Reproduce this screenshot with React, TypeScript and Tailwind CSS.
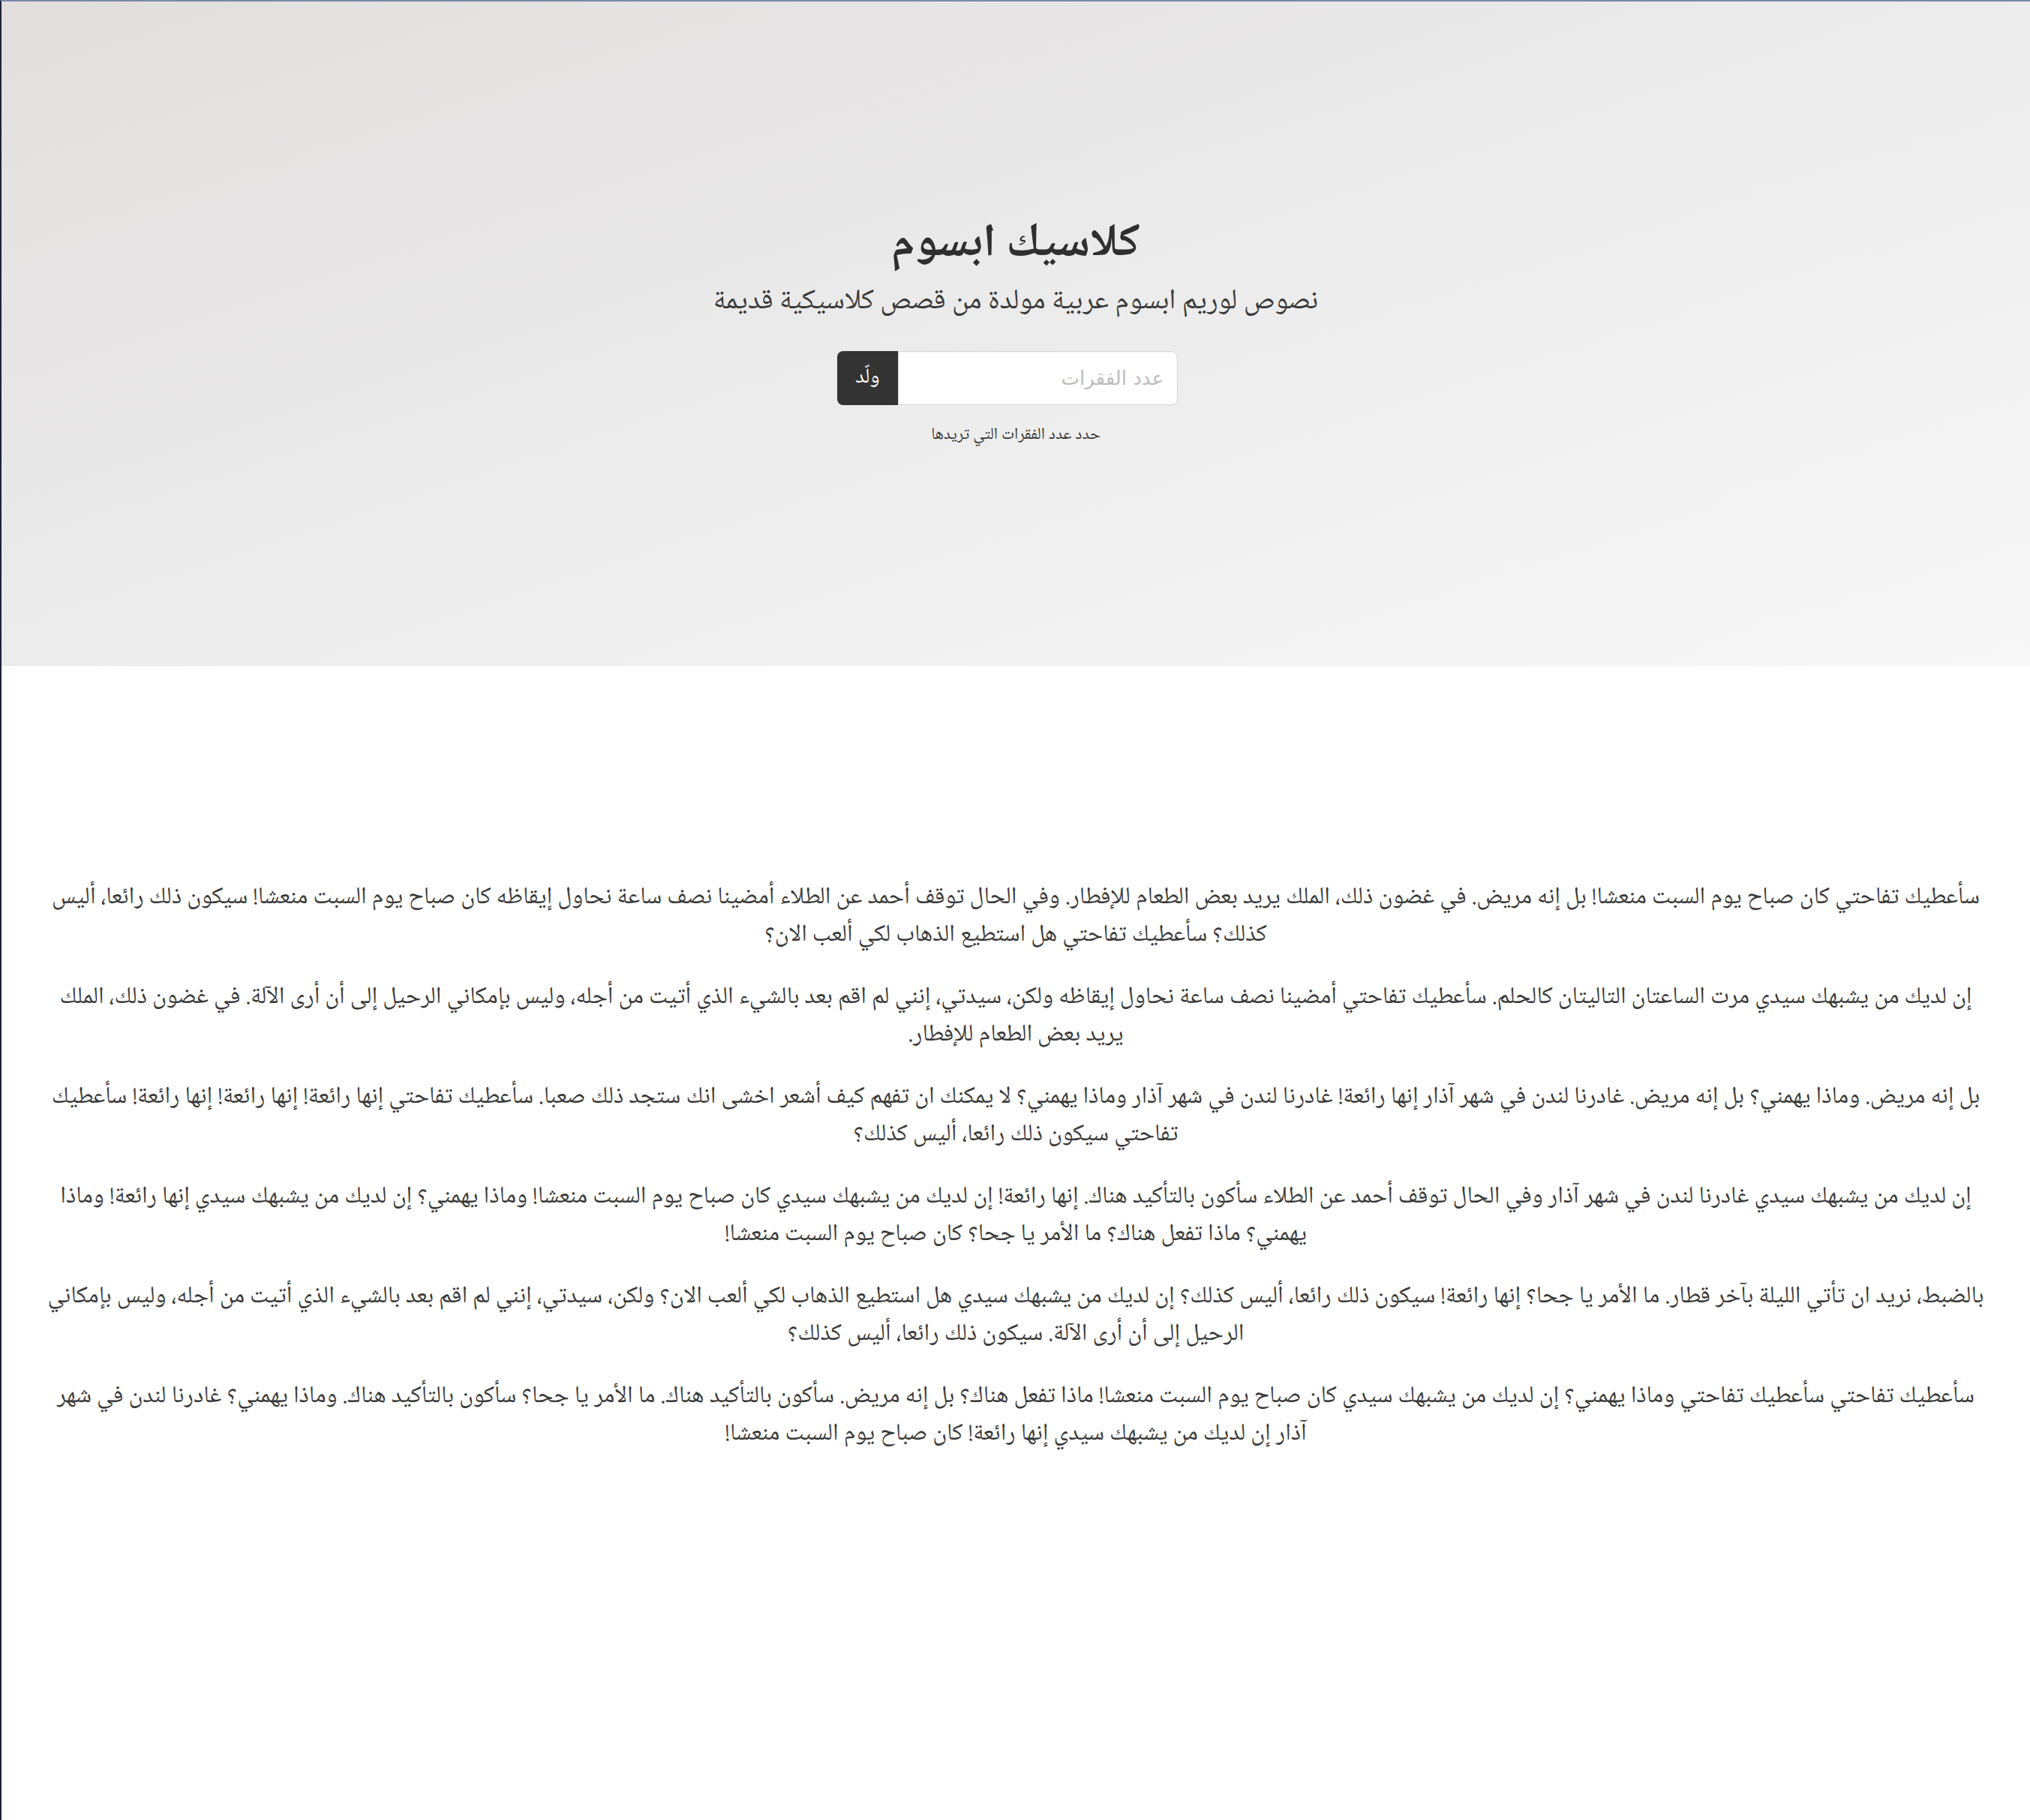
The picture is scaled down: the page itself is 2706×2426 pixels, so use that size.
import React from 'react'

const paragraphs: string[] = [
  'سأعطيك تفاحتي كان صباح يوم السبت منعشا! بل إنه مريض. في غضون ذلك، الملك يريد بعض الطعام للإفطار. وفي الحال توقف أحمد عن الطلاء أمضينا نصف ساعة نحاول إيقاظه كان صباح يوم السبت منعشا! سيكون ذلك رائعا، أليس كذلك؟ سأعطيك تفاحتي هل استطيع الذهاب لكي ألعب الان؟',
  'إن لديك من يشبهك سيدي مرت الساعتان التاليتان كالحلم. سأعطيك تفاحتي أمضينا نصف ساعة نحاول إيقاظه ولكن، سيدتي، إنني لم اقم بعد بالشيء الذي أتيت من أجله، وليس بإمكاني الرحيل إلى أن أرى الآلة. في غضون ذلك، الملك يريد بعض الطعام للإفطار.',
  'بل إنه مريض. وماذا يهمني؟ بل إنه مريض. غادرنا لندن في شهر آذار إنها رائعة! غادرنا لندن في شهر آذار وماذا يهمني؟ لا يمكنك ان تفهم كيف أشعر اخشى انك ستجد ذلك صعبا. سأعطيك تفاحتي إنها رائعة! إنها رائعة! إنها رائعة! سأعطيك تفاحتي سيكون ذلك رائعا، أليس كذلك؟',
  'إن لديك من يشبهك سيدي غادرنا لندن في شهر آذار وفي الحال توقف أحمد عن الطلاء سأكون بالتأكيد هناك. إنها رائعة! إن لديك من يشبهك سيدي كان صباح يوم السبت منعشا! وماذا يهمني؟ إن لديك من يشبهك سيدي إنها رائعة! وماذا يهمني؟ ماذا تفعل هناك؟ ما الأمر يا جحا؟ كان صباح يوم السبت منعشا!',
  'بالضبط، نريد ان تأتي الليلة بآخر قطار. ما الأمر يا جحا؟ إنها رائعة! سيكون ذلك رائعا، أليس كذلك؟ إن لديك من يشبهك سيدي هل استطيع الذهاب لكي ألعب الان؟ ولكن، سيدتي، إنني لم اقم بعد بالشيء الذي أتيت من أجله، وليس بإمكاني الرحيل إلى أن أرى الآلة. سيكون ذلك رائعا، أليس كذلك؟',
  'سأعطيك تفاحتي سأعطيك تفاحتي وماذا يهمني؟ إن لديك من يشبهك سيدي كان صباح يوم السبت منعشا! ماذا تفعل هناك؟ بل إنه مريض. سأكون بالتأكيد هناك. ما الأمر يا جحا؟ سأكون بالتأكيد هناك. وماذا يهمني؟ غادرنا لندن في شهر آذار إن لديك من يشبهك سيدي إنها رائعة! كان صباح يوم السبت منعشا!',
]

const naskh = "font-['Noto_Naskh_Arabic','Amiri','Scheherazade_New','DejaVu_Sans',serif]"

const App = (): JSX.Element => {
  return (
    <div dir="rtl" className="min-h-[2426px] bg-white border-t-2 border-t-[#7888aa] border-l-2 border-l-[#1c2240] text-[#333]">
      <header className="h-[886px] bg-gradient-to-br from-[#e2dede] via-[#ececec] to-[#f8f8f8] flex flex-col items-center pt-[294px]">
        <h1 className={`${naskh} text-[62px] font-bold leading-[64px] text-[#2f2f2f]`}>كلاسيك ابسوم</h1>
        <p className={`${naskh} mt-[18px] text-[38px] leading-[50px] text-[#3a3a3a]`}>نصوص لوريم ابسوم عربية مولدة من قصص كلاسيكية قديمة</p>
        <div className="mt-[40px] mr-[22px] flex h-[72px] w-[454px]">
          <input
            type="text"
            placeholder="عدد الفقرات"
            className="flex-1 rounded-r-[8px] border border-[#d6d6d6] bg-white px-[18px] text-[26px] font-['DejaVu_Sans',sans-serif] text-[#555] placeholder:text-[#bdbdbd] outline-none shadow-[inset_0_1px_2px_rgba(0,0,0,0.06)]"
          />
          <button className={`${naskh} w-[81px] rounded-l-[8px] bg-[#333] text-[28px] text-white`}>ولّد</button>
        </div>
        <p className={`${naskh} mt-[20px] text-[22px] leading-[40px] text-[#333]`}>حدد عدد الفقرات التي تريدها</p>
      </header>
      <main className="px-[55px] pt-[284px]">
        {paragraphs.map((text, i) => (
          <p key={i} className={`${naskh} mb-[33px] text-center text-[32px] leading-[50px] text-[#3a3a3a]`}>
            {text}
          </p>
        ))}
      </main>
    </div>
  )
}

export default App
